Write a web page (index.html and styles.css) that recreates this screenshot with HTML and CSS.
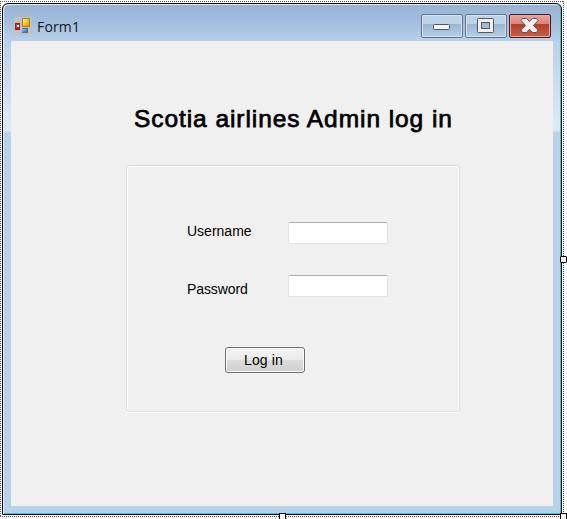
FILE: index.html
```html
<!DOCTYPE html>
<html lang="en">
<head>
<meta charset="utf-8">
<title>Form1</title>
<link rel="stylesheet" href="styles.css">
</head>
<body>
<div class="designer">
  <main class="window">
    <header class="titlebar">
      <svg class="app-icon" width="18" height="18" viewBox="0 0 18 18">
        <defs>
          <linearGradient id="gold" x2="1" y2="1"><stop stop-color="#fff0a0"/><stop offset=".5" stop-color="#f5c331"/><stop offset="1" stop-color="#d99a08"/></linearGradient>
          <linearGradient id="blue" x2="1" y2="1"><stop stop-color="#9bc8ff"/><stop offset="1" stop-color="#2466cc"/></linearGradient>
        </defs>
        <path fill="#bfc1c3" d="M0 0h18v18H0z"/>
        <path fill="#a31a12" d="M1 6h5v7H1z"/><path fill="#c8392c" d="M2 7h3v4H2z"/><path fill="#fff" d="M3 8h2v2H3z"/>
        <path fill="#b27f08" d="M8 1h8v9H8z"/><path fill="url(#gold)" d="M9 2h6v7H9z"/>
        <path fill="#386fc4" d="M8 11h6v5H8z"/><path fill="url(#blue)" d="M8 12h5v3H8z"/>
      </svg>
      <span class="caption">Form1</span>
      <div class="controls">
        <span class="control"><svg width="38" height="20" viewBox="0 0 38 20"><rect x="10.5" y="8.5" width="16" height="5" rx="1" fill="#f4f4f4" stroke="#535666"/></svg></span>
        <span class="control"><svg width="38" height="20" viewBox="0 0 38 20"><rect x="10.5" y="2.5" width="16" height="14" rx="1" fill="#f0f0f0" stroke="#535666"/><rect x="14.5" y="6.5" width="8" height="6" fill="#a3bad2" stroke="#535666"/></svg></span>
        <span class="control close"><svg width="38" height="20" viewBox="0 0 38 20"><path d="M11.5 2.5h4l3 3 3-3h4l1.5 2-4.6 5 4.6 4.6-1.5 2.4h-4l-3-3.3-3 3.3h-4L10 14.1l4.6-4.6-4.6-5z" fill="#f1f1f2" stroke="#535666" stroke-linejoin="round"/></svg></span>
      </div>
    </header>
    <section class="client">
      <h1>Scotia airlines Admin log in</h1>
      <form class="group">
        <div class="field"><label for="username">Username</label><input id="username" type="text"></div>
        <div class="field password"><label for="password">Password</label><input id="password" type="password"></div>
        <button type="button">Log in</button>
      </form>
    </section>
  </main>
  <svg class="selection" width="567" height="519" viewBox="0 0 567 519">
    <g fill="none" stroke="#555" stroke-dasharray="1 1">
      <path d="M0 1.5h564M.5 1v516M563.5 1v516M0 516.5h564"/>
    </g>
    <g fill="#fff" stroke="#000">
      <rect x="560.5" y="256.5" width="6" height="6" rx=".5"/>
      <rect x="279.5" y="513.5" width="6" height="6"/>
      <rect x="560.5" y="513.5" width="6" height="6"/>
    </g>
  </svg>
</div>
</body>
</html>
```
FILE: styles.css
```css
* { box-sizing: border-box; }
body { margin: 0; background: #fff; overflow: hidden; font-family: "Liberation Sans", Arial, sans-serif; }
.designer { position: relative; width: 567px; height: 519px; padding: 3px 0 0 2px; }
.window {
  width: 560px; height: 512px; padding: 0 7px 0 8px;
  border: 1px solid #000;
  border-radius: 6px 6px 0 0;
  box-shadow: inset 1px 1px #e4eef8, inset -1px -1px #30c8e4;
  background: linear-gradient(#98b4d2 0, #a3bfdd 18px, #b8d0ea 37px, #c8daee 70px, #deeaf6 126px, #b9d0e9 129px);
}
.titlebar { height: 37px; display: flex; align-items: flex-start; }
.app-icon { margin: 13px 0 0 3px; flex: none; }
.caption { font: 14px/20px "Open Sans", "Noto Sans", sans-serif; letter-spacing: .15px; margin: 13px 0 0 5px; color: #101820; }
.controls { display: flex; gap: 2px; margin: 10px 3px 0 auto; }
.control {
  width: 42px; height: 24px; padding: 1px; border: 1px solid #61738f; border-radius: 2px;
  background: linear-gradient(#bfd3e8 0 40%, #9ab5d1 41%, #b5cee7); box-shadow: inset 0 0 0 1px #d3e1f0;
}
.control svg { display: block; }
.close { border-color: #4b1721; background: linear-gradient(#e5a59b 0, #d88678 40%, #b63c27 41%, #c46145); box-shadow: inset 0 0 0 1px #e6aaa0; }
.client { width: 542px; height: 465px; background: #f0f0f0; padding-top: 63px; }
h1 { margin: 0 0 0 123px; font-size: 24.5px; line-height: 30px; font-weight: 400; white-space: nowrap; -webkit-text-stroke: .75px #000; letter-spacing: .93px; }
.group {
  width: 334px; height: 247px; margin: 31px 0 0 115px; padding: 56px 0 0 60px;
  border: 1px solid #d5dfe5; border-radius: 3px; box-shadow: inset 1px 1px #fff, inset -1px 0 #fff, 0 1px #fff;
}
.field { display: flex; align-items: flex-start; height: 53px; }
label { width: 101px; font-size: 14px; line-height: 18px; }
.field.password label { padding-top: 5px; letter-spacing: -.1px; }
input { width: 100px; height: 22px; padding: 0 4px; background: #fff; border: 1px solid #e2e3ea; border-top-color: #abadb3; border-radius: 2px; outline: 0; }
button {
  display: block; width: 80px; height: 26px; margin: 19px 0 0 38px; padding: 0 3px 0 0;
  border: 1px solid #707070; border-radius: 3px; font: 14px/22px "Liberation Sans", Arial, sans-serif; letter-spacing: .15px; color: #000;
  background: linear-gradient(#f2f2f2 0, #ebebeb 48%, #dddddd 50%, #cfcfcf); box-shadow: inset 0 0 0 1px #fafafa;
}
.selection { position: absolute; left: 0; top: 0; pointer-events: none; }
```
